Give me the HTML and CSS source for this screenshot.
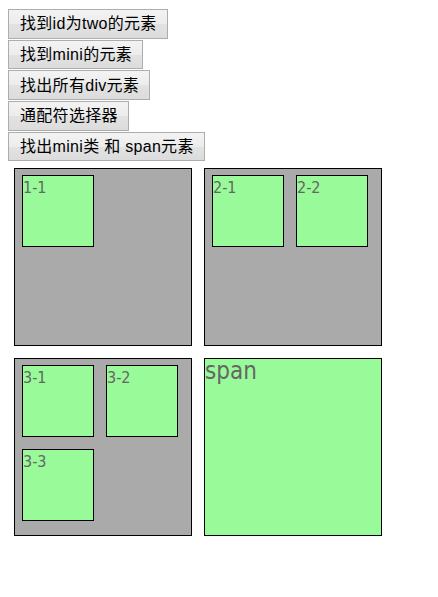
FILE: index.html
```html
<!DOCTYPE html>
<html>
<head>
<meta charset="utf-8">
<title>选择器</title>
<link rel="stylesheet" href="styles.css">
</head>
<body>
<div class="buttons">
  <button class="btn" type="button">找到id为two的元素</button>
  <button class="btn" type="button">找到mini的元素</button>
  <button class="btn" type="button">找出所有div元素</button>
  <button class="btn" type="button">通配符选择器</button>
  <button class="btn" type="button">找出mini类 和 span元素</button>
</div>
<div class="boxes">
  <div class="box" id="one">
    <div class="mini">1-1</div>
  </div>
  <div class="box" id="two">
    <div class="mini">2-1</div>
    <div class="mini">2-2</div>
  </div>
  <div class="box">
    <div class="mini">3-1</div>
    <div class="mini">3-2</div>
    <div class="mini">3-3</div>
  </div>
  <span class="box span-box">span</span>
</div>
</body>
</html>
```
FILE: styles.css
```css
html, body {
  margin: 0;
  padding: 0;
  background: #ffffff;
}

body {
  padding: 8px;
  font-family: "DejaVu Sans Condensed", "DejaVu Sans", sans-serif;
}

.buttons {
  display: flex;
  flex-direction: column;
  align-items: flex-start;
  padding-top: 1px;
}

.btn {
  display: block;
  box-sizing: border-box;
  height: 29.7px;
  margin: 0 0 1px 0;
  padding: 0 10px 0 11px;
  font-family: "Liberation Sans", "Noto Sans CJK SC", sans-serif;
  font-size: 16px;
  letter-spacing: 0.3px;
  color: #000;
  background: linear-gradient(#f3f3f3, #ececec 50%, #e2e2e2 51%, #dcdcdc);
  border: 1px solid #adadad;
  border-radius: 0;
  line-height: 27px;
  white-space: nowrap;
}

.boxes {
  display: flex;
  flex-wrap: wrap;
  width: 380px;
  margin-top: 0;
}

.box {
  display: flex;
  flex-wrap: wrap;
  align-content: flex-start;
  box-sizing: border-box;
  width: 178px;
  height: 178px;
  margin: 6px;
  padding: 0 0 0 1px;
  background: #aaaaaa;
  border: 1px solid #000;
}

.mini {
  box-sizing: border-box;
  width: 72px;
  height: 72px;
  margin: 6px;
  padding-top: 2px;
  background: #99fa99;
  border: 1px solid #000;
  color: #666666;
  font-size: 16px;
  line-height: 20px;
}

.span-box {
  display: block;
  padding: 0;
  background: #99fa99;
  color: #666666;
  font-size: 24px;
  line-height: 24px;
}
```
